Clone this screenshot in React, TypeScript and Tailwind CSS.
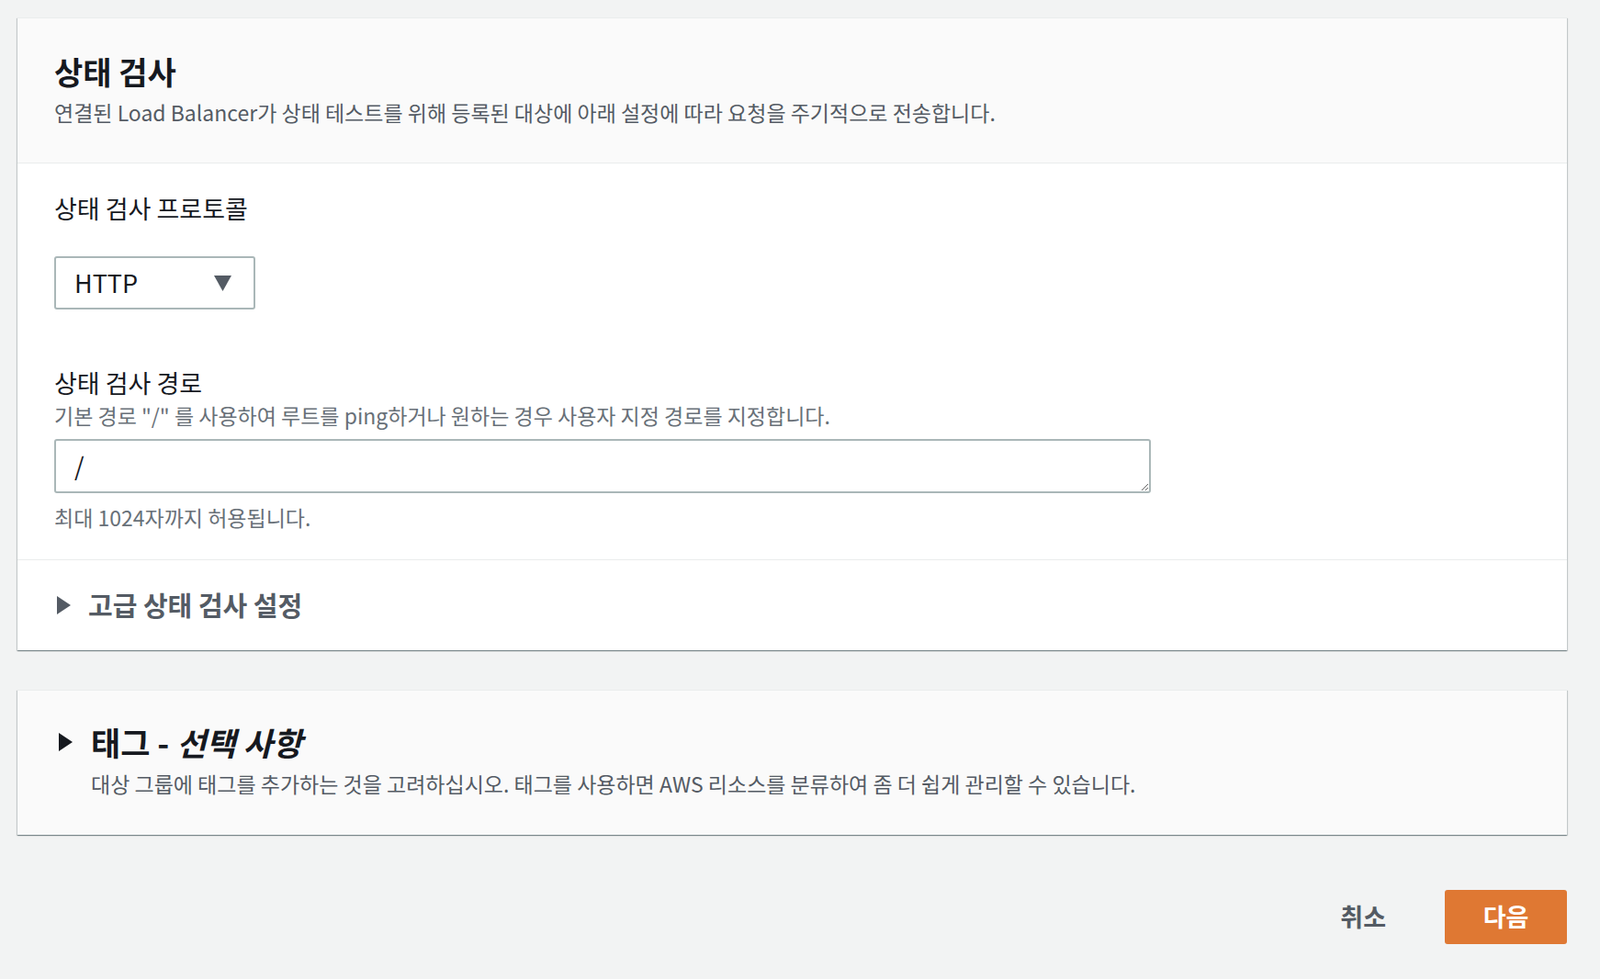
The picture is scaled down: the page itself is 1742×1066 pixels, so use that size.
import React from "react";

const font = { fontFamily: '"Noto Sans CJK KR", "Noto Sans", sans-serif' };

const cardShadow =
  "shadow-[0_1px_1px_0_rgba(0,28,36,0.3),1px_1px_1px_0_rgba(0,28,36,0.15),-1px_1px_1px_0_rgba(0,28,36,0.15)]";

function CaretRight({ className }: { className: string }) {
  return (
    <svg className={className} width="17" height="20" viewBox="0 0 17 20" aria-hidden="true">
      <polygon points="1,0 16,10 1,20" fill="currentColor" />
    </svg>
  );
}

function HealthCheckCard() {
  return (
    <section className={`border-t border-[#eaeded] bg-white ${cardShadow}`}>
      <header className="border-b border-[#eaeded] bg-[#fafafa] px-[40px] pt-[37px] pb-[41px]">
        <h2 className="text-[34px] leading-[42px] font-bold text-[#16191f]">상태 검사</h2>
        <p className="mt-[9px] text-[23px] leading-[28px] text-[#545b64]">
          연결된 Load Balancer가 상태 테스트를 위해 등록된 대상에 아래 설정에 따라 요청을 주기적으로 전송합니다.
        </p>
      </header>

      <div className="border-b border-[#eaeded] px-[40px] pt-[31px] pb-[32px]">
        <label className="block text-[27px] leading-[36px] text-[#16191f]">상태 검사 프로토콜</label>
        <div className="mt-[34px] flex h-[58px] w-[219px] items-center justify-between rounded-[3px] border-2 border-[#aab7b8] bg-white pr-[24px] pl-[20px]">
          <span className="text-[27px] text-[#16191f]">HTTP</span>
          <svg width="19" height="17" viewBox="0 0 19 17" aria-hidden="true">
            <polygon points="0,0 19,0 9.5,17" fill="#545b64" />
          </svg>
        </div>

        <label className="mt-[62px] block text-[27px] leading-[36px] text-[#16191f]">상태 검사 경로</label>
        <p className="mt-[3px] text-[23px] leading-[28px] text-[#687078]">
          기본 경로 "/" 를 사용하여 루트를 ping하거나 원하는 경우 사용자 지정 경로를 지정합니다.
        </p>
        <textarea
          defaultValue="/"
          rows={1}
          className="mt-[12px] block h-[59px] w-[1194px] rounded-[3px] border-2 border-[#aab7b8] bg-white px-[20px] py-[9px] text-[27px] leading-[36px] text-[#16191f] outline-none"
          style={font}
        />
        <p className="mt-[12px] text-[23px] leading-[28px] text-[#687078]">최대 1024자까지 허용됩니다.</p>
      </div>

      <div className="flex h-[98px] items-center gap-[18px] px-[42px]">
        <CaretRight className="text-[#545b64]" />
        <span className="text-[29px] font-bold text-[#545b64]">고급 상태 검사 설정</span>
      </div>
    </section>
  );
}

function TagsCard() {
  return (
    <section className={`mt-[43px] border-t border-[#eaeded] bg-[#fafafa] px-[44px] pt-[35px] pb-[42px] ${cardShadow}`}>
      <div className="flex items-center gap-[19px]">
        <CaretRight className="text-[#16191f]" />
        <h2 className="text-[35px] leading-[42px] font-bold text-[#16191f]">
          태그 - <i>선택 사항</i>
        </h2>
      </div>
      <p className="mt-[10px] pl-[36px] text-[23px] leading-[28px] text-[#545b64]">
        대상 그룹에 태그를 추가하는 것을 고려하십시오. 태그를 사용하면 AWS 리소스를 분류하여 좀 더 쉽게 관리할 수 있습니다.
      </p>
    </section>
  );
}

export default function App() {
  return (
    <div className="min-h-[1066px] bg-[#f2f3f3] pt-[19px] pr-[36px] pl-[19px]" style={font}>
      <HealthCheckCard />
      <TagsCard />
      <div className="mt-[60px] flex items-center justify-end gap-[64px]">
        <button type="button" className="text-[27px] font-bold text-[#545b64]" style={font}>
          취소
        </button>
        <button
          type="button"
          className="h-[59px] w-[133px] rounded-[3px] bg-[#df7833] text-[27px] font-bold text-white"
          style={font}
        >
          다음
        </button>
      </div>
    </div>
  );
}
